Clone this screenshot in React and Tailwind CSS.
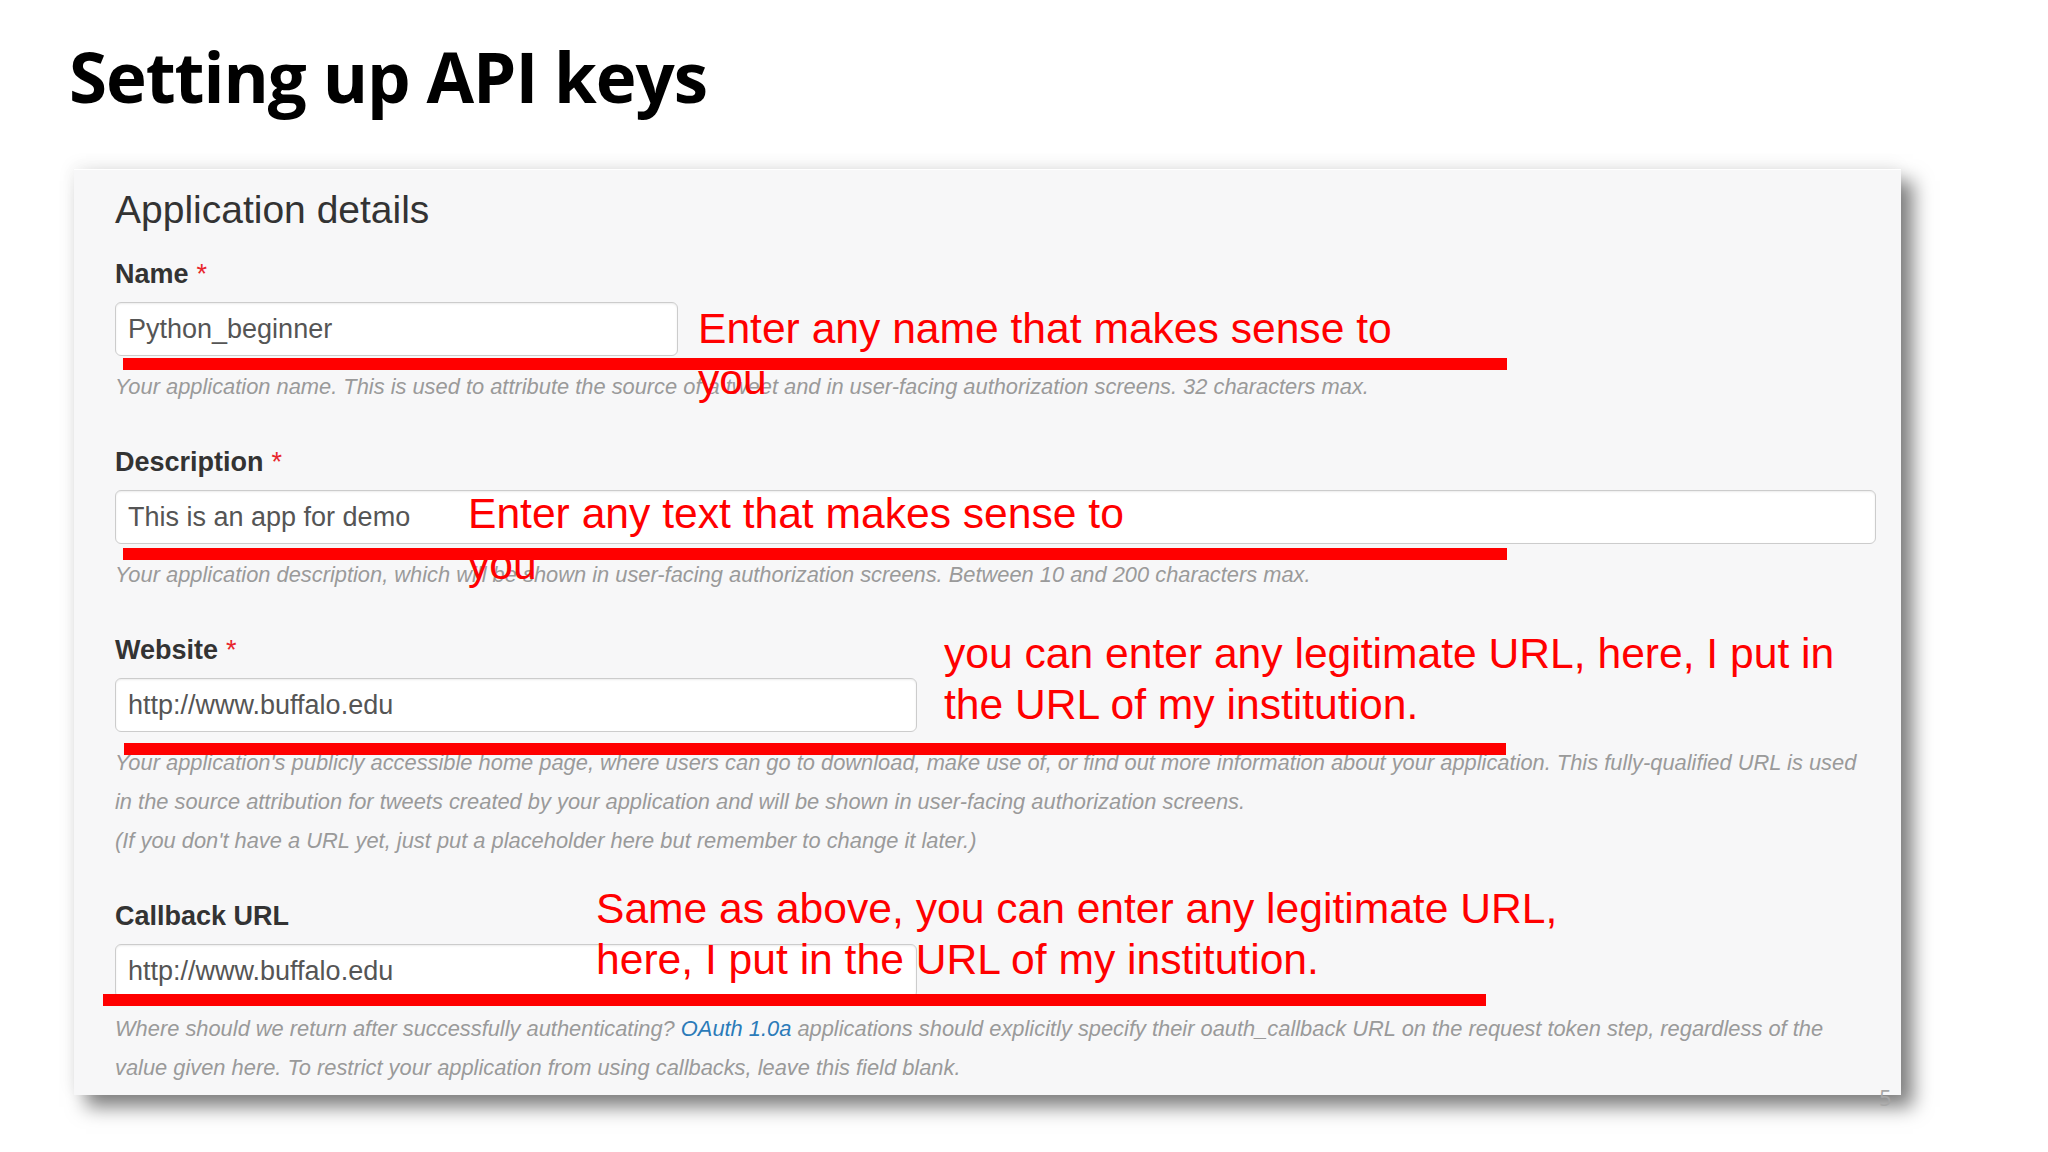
const SANS = { fontFamily: '"Liberation Sans", Arial, sans-serif' }

const FIELDS = [
  {
    label: 'Name',
    required: true,
    value: 'Python_beginner',
    width: 'w-[563px]',
    help: [
      'Your application name. This is used to attribute the source of a tweet and in user-facing authorization screens. 32 characters max.',
    ],
  },
  {
    label: 'Description',
    required: true,
    value: 'This is an app for demo',
    width: 'w-[1761px]',
    help: [
      'Your application description, which will be shown in user-facing authorization screens. Between 10 and 200 characters max.',
    ],
  },
  {
    label: 'Website',
    required: true,
    value: 'http://www.buffalo.edu',
    width: 'w-[802px]',
    help: [
      "Your application's publicly accessible home page, where users can go to download, make use of, or find out more information about your application. This fully-qualified URL is used",
      'in the source attribution for tweets created by your application and will be shown in user-facing authorization screens.',
      "(If you don't have a URL yet, just put a placeholder here but remember to change it later.)",
    ],
  },
  {
    label: 'Callback URL',
    required: false,
    value: 'http://www.buffalo.edu',
    width: 'w-[802px]',
    help: [
      <>
        Where should we return after successfully authenticating?{' '}
        <span className="text-[#2b7bb9]">OAuth 1.0a</span> applications should explicitly specify their
        oauth_callback URL on the request token step, regardless of the
      </>,
      'value given here. To restrict your application from using callbacks, leave this field blank.',
    ],
  },
]

// red notes drawn over the form
const NOTES = [
  { left: 'left-[698px]', top: 'top-[303px]', lines: ['Enter any name that makes sense to', 'you'] },
  { left: 'left-[468px]', top: 'top-[488px]', lines: ['Enter any text that makes sense to', 'you'] },
  {
    left: 'left-[944px]',
    top: 'top-[628px]',
    lines: ['you can enter any legitimate URL, here, I put in', 'the URL of my institution.'],
  },
  {
    left: 'left-[596px]',
    top: 'top-[883px]',
    lines: ['Same as above, you can enter any legitimate URL,', 'here, I put in the URL of my institution.'],
  },
]

const BARS = [
  'left-[123px] top-[358px] w-[1384px]',
  'left-[123px] top-[548px] w-[1384px]',
  'left-[124px] top-[743px] w-[1382px]',
  'left-[103px] top-[994px] w-[1383px]',
]

function Field({ field, first }) {
  return (
    <div className={first ? 'mt-[22px]' : 'mt-[38px]'}>
      <div className="text-[27px] leading-[36px] font-bold text-[#333]">
        {field.label}
        {field.required && <span className="ml-[8px] font-normal text-[#e8262d]">*</span>}
      </div>
      <div
        className={`mt-[10px] h-[54px] ${field.width} flex items-center rounded-[6px] border border-[#cccccc] bg-white pl-[12px] text-[27px] leading-[52px] text-[#555] shadow-[inset_0_1px_2px_rgba(0,0,0,0.08)]`}
      >
        {field.value}
      </div>
      <div className="mt-[11px] text-[21.85px] leading-[39px] italic text-[#9a9a9a]">
        {field.help.map((line, i) => (
          <div key={i} className="whitespace-nowrap">
            {line}
          </div>
        ))}
      </div>
    </div>
  )
}

export default function App() {
  return (
    <div className="relative w-[2048px] h-[1152px] overflow-hidden bg-white pt-[41px]" style={SANS}>
      <h1
        className="ml-[69px] text-[69px] leading-[70px] font-bold tracking-[-0.015em] text-black"
        style={{ fontFamily: '"Open Sans", "Noto Sans", sans-serif' }}
      >
        Setting up API keys
      </h1>

      <div className="mt-[58px] ml-[74px] w-[1827px] h-[926px] border-t border-white bg-[#f7f7f8] pl-[41px] pt-[16px] pb-[8px] shadow-[12px_12px_18px_rgba(0,0,0,0.5),-2px_-4px_16px_rgba(0,0,0,0.06)]">
        <div className="text-[39px] leading-[48px] text-[#333]">Application details</div>
        {FIELDS.map((f, i) => (
          <Field key={f.label} field={f} first={i === 0} />
        ))}
      </div>

      {BARS.map((b) => (
        <div key={b} className={`absolute h-[12px] bg-[#ff0000] ${b}`} />
      ))}

      {NOTES.map((n) => (
        <div
          key={n.lines[0]}
          className={`absolute ${n.left} ${n.top} text-[42.6px] leading-[51px] text-[#ff0000] whitespace-nowrap`}
        >
          {n.lines.map((l) => (
            <div key={l}>{l}</div>
          ))}
        </div>
      ))}

      <div
        className="absolute left-[1879px] top-[1084px] text-[22px] leading-[26px] text-[#a6a6a6]"
        style={{ fontFamily: '"Open Sans", "Noto Sans", sans-serif' }}
      >
        5
      </div>
    </div>
  )
}
